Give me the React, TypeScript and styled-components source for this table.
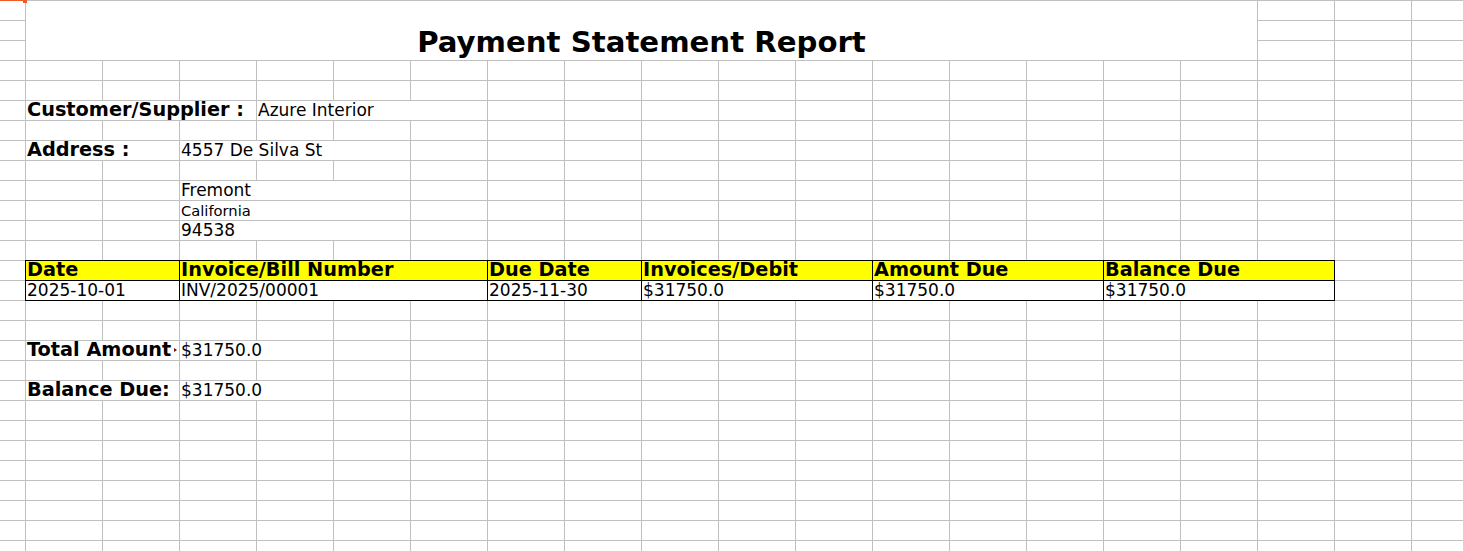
import React from "react";
import styled, { createGlobalStyle } from "styled-components";

const GRID = "#c0c0c0";
const ROWS = 28;
const COLS = 20;

const GlobalStyle = createGlobalStyle`
  html, body {
    margin: 0;
    padding: 0;
    background: #fff;
    overflow: hidden;
  }
  body {
    font-family: "DejaVu Sans", "Liberation Sans", sans-serif;
    color: #000;
  }
`;

const Sheet = styled.div`
  position: relative;
  display: grid;
  grid-template-columns: 26px repeat(${COLS - 1}, 77px);
  grid-template-rows: repeat(${ROWS}, 20px);
  width: 1463px;
  height: 551px;
  border-top: 1px solid ${GRID};
  box-sizing: border-box;
`;

const CursorLine = styled.div`
  position: absolute;
  left: 0;
  top: -1px;
  width: 25px;
  height: 1px;
  background: #f05a28;
`;

const CursorHandle = styled.div`
  position: absolute;
  left: 23px;
  top: -1px;
  width: 4px;
  height: 3px;
  background: #f05a28;
`;

type Place = {
  $row: number;
  $col: number;
  $span?: number;
  $rows?: number;
};

const Cell = styled.div<Place & { $center?: boolean }>`
  grid-row: ${({ $row, $rows = 1 }) => `${$row + 1} / span ${$rows}`};
  grid-column: ${({ $col, $span = 1 }) => `${$col + 1} / span ${$span}`};
  position: relative;
  display: flex;
  align-items: flex-end;
  justify-content: ${({ $center }) => ($center ? "center" : "flex-start")};
  min-width: 0;
  box-sizing: border-box;
  padding: 0 1px 1px 1px;
  border-right: 1px solid ${GRID};
  border-bottom: 1px solid ${GRID};
  white-space: nowrap;
`;

const TableCell = styled(Cell)<{ $head?: boolean; $first?: boolean }>`
  background: ${({ $head }) => ($head ? "#ffff00" : "#fff")};
  border-right-color: #000;
  border-bottom-color: #000;
  box-shadow: ${({ $head, $first }) =>
    [
      $head ? "0 -1px 0 #000" : "",
      $first ? "-1px 0 0 #000" : "",
      $head && $first ? "-1px -1px 0 #000" : "",
    ]
      .filter(Boolean)
      .join(", ") || "none"};
`;

const Title = styled.span`
  font-size: 29.2px;
  font-weight: bold;
  line-height: 1;
  padding-bottom: 2px;
`;

const Label = styled.span`
  font-size: 19.3px;
  font-weight: bold;
  line-height: 1;
`;

// LibreOffice's little "text is cut" arrow at the right edge of a cell
const ClipMark = styled.span`
  position: absolute;
  right: 2px;
  bottom: 8px;
  width: 0;
  height: 0;
  border-top: 2px solid transparent;
  border-bottom: 2px solid transparent;
  border-left: 3px solid #6b0d0d;
`;

const Value = styled.span<{ $small?: boolean }>`
  font-size: ${({ $small }) => ($small ? "14.7px" : "17px")};
  line-height: 1;
`;

type Item = {
  row: number;
  col: number;
  span?: number;
  rows?: number;
  node: React.ReactNode;
};

const info: Item[] = [
  { row: 5, col: 1, span: 3, node: <Label>Customer/Supplier :</Label> },
  { row: 5, col: 4, span: 3, node: <Value>Azure Interior</Value> },
  { row: 7, col: 1, span: 2, node: <Label>Address :</Label> },
  { row: 7, col: 3, span: 3, node: <Value>4557 De Silva St</Value> },
  { row: 9, col: 3, span: 3, node: <Value>Fremont</Value> },
  { row: 10, col: 3, span: 3, node: <Value $small>California</Value> },
  { row: 11, col: 3, span: 3, node: <Value>94538</Value> },
  {
    row: 17,
    col: 1,
    span: 2,
    node: (
      <>
        <Label>Total Amount</Label>
        <ClipMark />
      </>
    ),
  },
  { row: 17, col: 3, span: 2, node: <Value>$31750.0</Value> },
  { row: 19, col: 1, span: 2, node: <Label>Balance Due:</Label> },
  { row: 19, col: 3, span: 2, node: <Value>$31750.0</Value> },
];

const columns = [
  { col: 1, span: 2, head: "Date", value: "2025-10-01" },
  { col: 3, span: 4, head: "Invoice/Bill Number", value: "INV/2025/00001" },
  { col: 7, span: 2, head: "Due Date", value: "2025-11-30" },
  { col: 9, span: 3, head: "Invoices/Debit", value: "$31750.0" },
  { col: 12, span: 3, head: "Amount Due", value: "$31750.0" },
  { col: 15, span: 3, head: "Balance Due", value: "$31750.0" },
];

const HEAD_ROW = 13;

export default function App() {
  const taken: boolean[][] = Array.from({ length: ROWS }, () =>
    Array(COLS).fill(false)
  );
  const cells: { row: number; col: number; el: React.ReactNode }[] = [];

  const claim = (row: number, col: number, span = 1, rows = 1) => {
    for (let r = row; r < row + rows; r++)
      for (let c = col; c < col + span; c++) taken[r][c] = true;
  };

  claim(0, 1, 16, 3);
  cells.push({
    row: 0,
    col: 1,
    el: (
      <Cell key="title" $row={0} $col={1} $span={16} $rows={3} $center>
        <Title>Payment Statement Report</Title>
      </Cell>
    ),
  });

  info.forEach((it, i) => {
    claim(it.row, it.col, it.span, it.rows);
    cells.push({
      row: it.row,
      col: it.col,
      el: (
        <Cell key={`info-${i}`} $row={it.row} $col={it.col} $span={it.span}>
          {it.node}
        </Cell>
      ),
    });
  });

  columns.forEach((c, i) => {
    claim(HEAD_ROW, c.col, c.span);
    claim(HEAD_ROW + 1, c.col, c.span);
    cells.push({
      row: HEAD_ROW,
      col: c.col,
      el: (
        <TableCell
          key={`h-${i}`}
          $row={HEAD_ROW}
          $col={c.col}
          $span={c.span}
          $head
          $first={i === 0}
        >
          <Label>{c.head}</Label>
        </TableCell>
      ),
    });
    cells.push({
      row: HEAD_ROW + 1,
      col: c.col,
      el: (
        <TableCell
          key={`d-${i}`}
          $row={HEAD_ROW + 1}
          $col={c.col}
          $span={c.span}
          $first={i === 0}
        >
          <Value>{c.value}</Value>
        </TableCell>
      ),
    });
  });

  for (let r = 0; r < ROWS; r++)
    for (let c = 0; c < COLS; c++)
      if (!taken[r][c])
        cells.push({
          row: r,
          col: c,
          el: <Cell key={`e-${r}-${c}`} $row={r} $col={c} />,
        });

  cells.sort((a, b) => a.row - b.row || a.col - b.col);

  return (
    <>
      <GlobalStyle />
      <Sheet>
        {cells.map((c) => c.el)}
        <CursorLine />
        <CursorHandle />
      </Sheet>
    </>
  );
}
